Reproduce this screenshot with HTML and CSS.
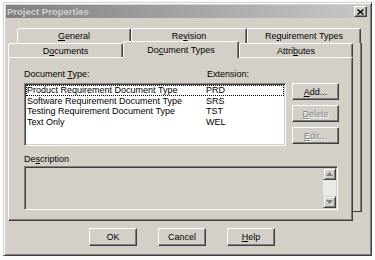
FILE: index.html
```html
<!DOCTYPE html>
<html lang="en">
<head>
    <meta charset="UTF-8">
    <title>Project Properties</title>
    <link rel="stylesheet" href="styles.css">
</head>
<body>
    <div class="dialog">
        <div class="titlebar">
            <span class="title">Project Properties</span>
            <span class="close-btn">
                <svg width="7" height="6" viewBox="0 0 7 6"><path d="M0.5 0.5 L6.5 5.5 M6.5 0.5 L0.5 5.5" stroke="#000" stroke-width="1.4"/></svg>
            </span>
        </div>

        <div class="tabs">
            <div class="tab-row back-row">
                <div class="tab tab-a"><u>G</u>eneral</div>
                <div class="tab tab-b">Re<u>v</u>ision</div>
                <div class="tab tab-c">Re<u>q</u>uirement Types</div>
            </div>
            <div class="tab-body">
                <div class="tab-main">
                    <div class="tab-row front-row">
                        <div class="tab tab-a">D<u>o</u>cuments</div>
                        <div class="tab tab-b selected">Do<u>c</u>ument Types</div>
                        <div class="tab tab-c">Attri<u>b</u>utes</div>
                    </div>
                    <div class="panel">
                        <div class="label-row">
                            <span class="col-type">Document <u>T</u>ype:</span>
                            <span>Extension:</span>
                        </div>
                        <div class="list-area">
                            <div class="listbox">
                                <div class="list-row focus"><span class="col-name">Product Requirement Document Type</span><span>PRD</span></div>
                                <div class="list-row"><span class="col-name">Software Requirement Document Type</span><span>SRS</span></div>
                                <div class="list-row"><span class="col-name">Testing Requirement Document Type</span><span>TST</span></div>
                                <div class="list-row"><span class="col-name">Text Only</span><span>WEL</span></div>
                            </div>
                            <div class="side-buttons">
                                <button class="btn"><u>A</u>dd...</button>
                                <button class="btn disabled"><u>D</u>elete</button>
                                <button class="btn disabled"><u>E</u>dit...</button>
                            </div>
                        </div>
                        <div class="desc-label">De<u>s</u>cription</div>
                        <div class="desc-box">
                            <div class="scrollbar">
                                <div class="sb-btn">
                                    <svg width="7" height="4" viewBox="0 0 7 4"><path d="M3.5 0 L7 4 L0 4 Z" fill="#808080"/></svg>
                                </div>
                                <div class="sb-track"></div>
                                <div class="sb-btn">
                                    <svg width="7" height="4" viewBox="0 0 7 4"><path d="M0 0 L7 0 L3.5 4 Z" fill="#808080"/></svg>
                                </div>
                            </div>
                        </div>
                    </div>
                </div>
                <div class="back-edge"></div>
            </div>
        </div>

        <div class="footer">
            <button class="btn btn-wide">OK</button>
            <button class="btn btn-wide">Cancel</button>
            <button class="btn btn-wide"><u>H</u>elp</button>
        </div>
    </div>
</body>
</html>
```

FILE: styles.css
```css
body {
    margin: 0;
    padding: 2px 3px;
    background: #fbfbfb;
    font-family: "Liberation Sans", Arial, sans-serif;
    font-size: 9px;
    color: #000;
}

.dialog {
    box-sizing: border-box;
    width: 369px;
    height: 254px;
    padding: 2px;
    background: #d4d0c8;
    border: 1px solid;
    border-color: #d4d0c8 #404040 #404040 #d4d0c8;
    box-shadow: inset 1px 1px #fff, inset -1px -1px #808080;
}

.titlebar {
    height: 13px;
    display: flex;
    align-items: center;
    justify-content: space-between;
    padding: 0 2px 0 1px;
    background: linear-gradient(to right, #808080, #c8c8c8);
}

.title {
    color: #d4d0c8;
    font-weight: bold;
    font-size: 9.5px;
}

.close-btn {
    box-sizing: border-box;
    width: 13px;
    height: 11px;
    display: flex;
    align-items: center;
    justify-content: center;
    background: #d4d0c8;
    border: 1px solid;
    border-color: #fff #404040 #404040 #fff;
    box-shadow: inset -1px -1px #808080;
}

/* tab control */
.tabs {
    margin: 10px 0 0 2px;
}

.tab-row {
    display: flex;
    align-items: flex-start;
}

.back-row {
    height: 15px;
    margin-left: 9px;
}

.front-row {
    height: 14px;
}

.tab {
    box-sizing: border-box;
    height: 100%;
    display: flex;
    align-items: center;
    justify-content: center;
    background: #d4d0c8;
    border: 1px solid;
    border-bottom: none;
    border-color: #fff #404040 transparent #fff;
    border-radius: 2px 2px 0 0;
    box-shadow: inset -1px 0 #808080;
}

.tab-a { width: 115px; }
.tab-b { width: 116px; }
.tab-c { width: 114px; }

.back-row .tab-a { width: 114px; }

.tab.selected {
    position: relative;
    z-index: 1;
    height: 17px;
    margin-top: -2px;
    margin-bottom: -1px;
}

.tab-body {
    display: flex;
    align-items: flex-start;
}

.back-edge {
    box-sizing: border-box;
    width: 9px;
    height: 169px;
    border-right: 1px solid #404040;
    border-bottom: 1px solid #404040;
    box-shadow: inset -1px 0 #808080;
}

.panel {
    box-sizing: border-box;
    width: 345px;
    height: 164px;
    padding: 11px 0 0 15px;
    border: 1px solid;
    border-color: #fff #404040 #404040 #fff;
    box-shadow: inset -1px -1px #808080;
}

.label-row {
    display: flex;
    line-height: 11px;
}

.col-type {
    width: 183px;
}

.list-area {
    display: flex;
    gap: 6px;
    margin-top: 3px;
}

.listbox,
.desc-box {
    box-sizing: border-box;
    padding: 1px;
    border: 1px solid;
    border-color: #808080 #fff #fff #808080;
    box-shadow: inset 1px 1px #404040, inset -1px -1px #d4d0c8;
}

.listbox {
    width: 262px;
    height: 63px;
    background: #fff;
}

.list-row {
    display: flex;
    padding-left: 1px;
    line-height: 10.5px;
}

.list-row.focus {
    outline: 1px dotted #000;
    outline-offset: -1px;
}

.col-name {
    width: 179px;
}

.side-buttons {
    display: flex;
    flex-direction: column;
    gap: 5px;
}

.btn {
    box-sizing: border-box;
    width: 47px;
    height: 17px;
    padding: 0;
    font: inherit;
    color: #000;
    background: #d4d0c8;
    border: 1px solid;
    border-color: #fff #404040 #404040 #fff;
    box-shadow: inset -1px -1px #808080;
}

.btn.disabled {
    color: #808080;
    text-shadow: 1px 1px #fff;
}

.desc-label {
    margin-top: 8px;
    line-height: 11px;
}

.desc-box {
    width: 314px;
    height: 44px;
    margin-top: 1px;
    background: #d4d0c8;
    display: flex;
    justify-content: flex-end;
}

.scrollbar {
    width: 13px;
    display: flex;
    flex-direction: column;
}

.sb-btn {
    box-sizing: border-box;
    height: 12px;
    display: flex;
    align-items: center;
    justify-content: center;
    background: #d4d0c8;
    border: 1px solid;
    border-color: #d4d0c8 #404040 #404040 #d4d0c8;
    box-shadow: inset 1px 1px #fff, inset -1px -1px #808080;
}

.sb-track {
    flex: 1;
    background: #ebe9e5;
}

.footer {
    display: flex;
    gap: 21px;
    margin: 7px 0 0 83px;
}

.btn-wide {
    width: 48px;
    height: 18px;
}
```
